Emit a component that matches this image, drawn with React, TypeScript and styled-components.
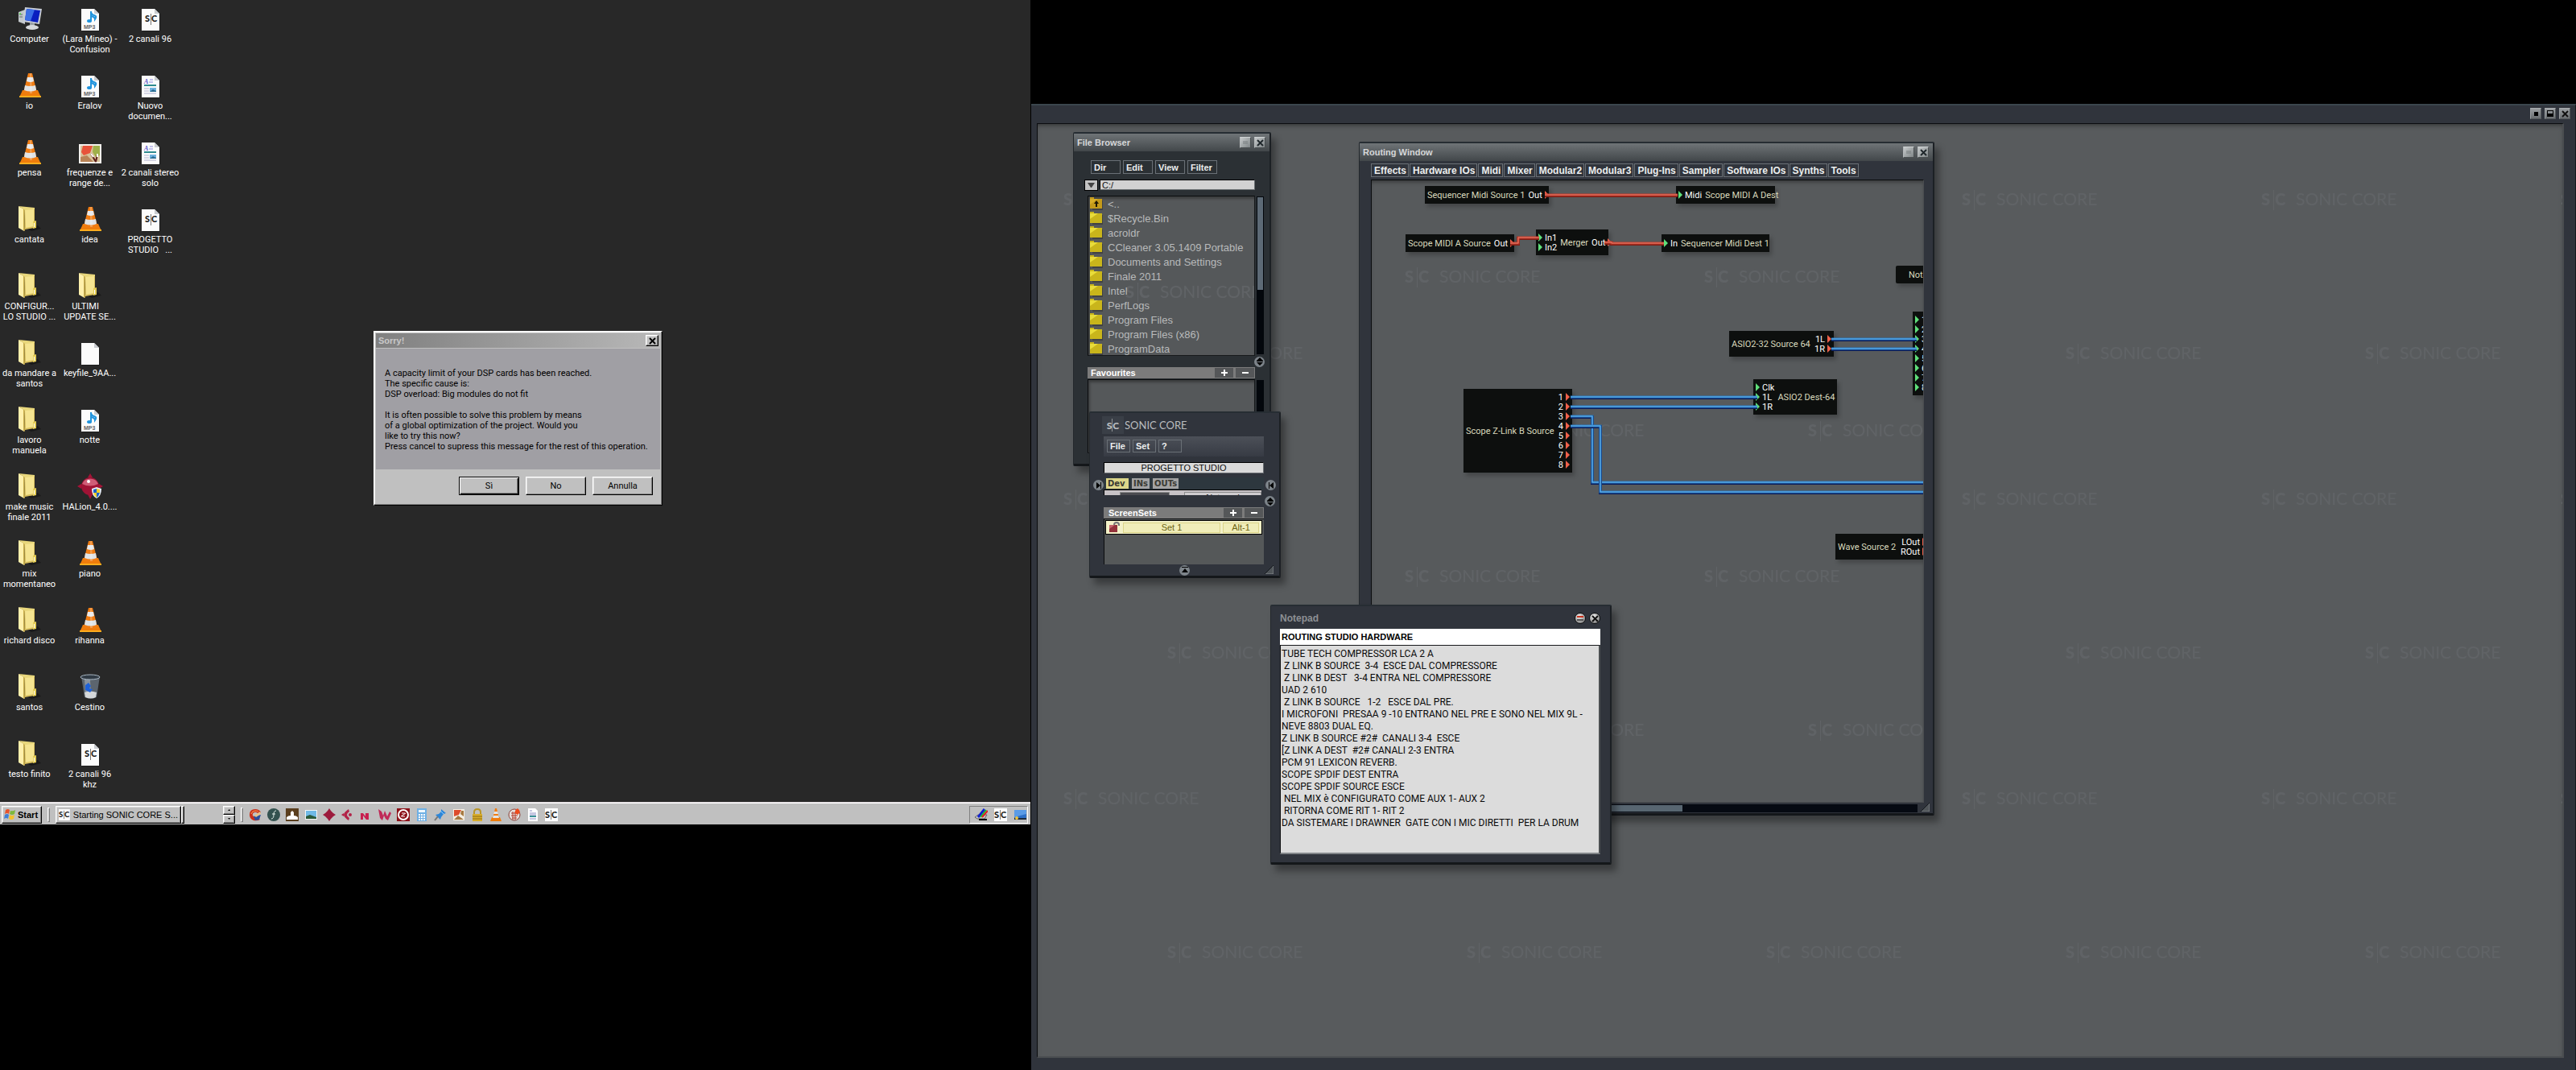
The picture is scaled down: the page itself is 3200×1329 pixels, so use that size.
import React from 'react';
import styled, { createGlobalStyle, css } from 'styled-components';

const SANS = '"Liberation Sans", Arial, Helvetica, sans-serif';
const NARROW = 'Roboto, "Liberation Sans", sans-serif';
const LOGO = 'Lato, "Open Sans", sans-serif';

const GlobalStyle = createGlobalStyle`
  * { box-sizing: border-box; }
  body { margin: 0; background: #000; font-family: ${SANS}; font-size: 11px; }
  button, input, textarea { font-family: inherit; font-size: inherit; margin: 0; border-radius: 0; outline: none; }
  ul { list-style: none; margin: 0; padding: 0; }
`;

const Screens = styled.div`
  display: grid;
  grid-template-columns: 2fr 3fr;
  min-height: 100vh;
`;

/* ---------- left monitor ---------- */

const LeftScreen = styled.div`
  position: relative;
  display: flex;
  flex-direction: column;
  align-self: start;
  background: #282828;
`;

const IconGrid = styled.ul`
  display: grid;
  grid-auto-flow: column;
  grid-template-rows: repeat(12, 83px);
  grid-auto-columns: 75px;
`;

const IconCell = styled.li`
  display: flex;
  flex-direction: column;
  align-items: center;
  gap: 3px;
  padding: 7px 2px 0 0;
  color: #fff;
  font-family: ${NARROW};
  text-align: center;
  line-height: 13px;
  white-space: pre;
  svg { flex: none; }
`;

type Kind = 'computer' | 'cone' | 'folder' | 'mp3' | 'sc' | 'doc' | 'photo' | 'blank' | 'halion' | 'bin';

const Sheet = ({ children }: { children?: React.ReactNode }) => (
  <>
    <path d="M6 5h15l7 6v21h-22z" fill="#111" opacity=".5" />
    <path d="M5 4h16l6 6v21H5z" fill="#fbfbfb" />
    <path d="M21 4l6 6h-6z" fill="#c9ccd0" />
    {children}
  </>
);

const ScMark = () => (
  <>
    <text x="9" y="20" fontFamily={LOGO} fontWeight="900" fontSize="11" fill="#1d1d1d">S</text>
    <rect x="16" y="10" width="1" height="14" fill="#777" />
    <text x="17" y="20" fontFamily={LOGO} fontWeight="900" fontSize="11" fill="#1d1d1d">C</text>
  </>
);

const DesktopGlyph = ({ kind, size = 32 }: { kind: Kind; size?: number }) => (
  <svg width={size} height={size} viewBox="0 0 32 32" aria-hidden="true">
    {kind === 'computer' && (
      <>
        <path d="M2 8l8-3v18l-8-3z" fill="#c3c8cb" />
        <path d="M3 11h4M3 14h4" stroke="#5f6a6e" />
        <circle cx="4" cy="10" r="1" fill="#4fe03a" />
        <path d="M10 2l21 2-3 19-20-3z" fill="#c9ced6" />
        <path d="M12 4l17 2-3 15-16-3z" fill="#0a1fc0" />
        <path d="M12 4l10 1-5 14-7-1z" fill="#3b6fe6" />
        <path d="M16 21l6 1v4h-6z" fill="#9da4a8" />
        <ellipse cx="19" cy="27" rx="8" ry="3" fill="#d7dadc" />
      </>
    )}
    {kind === 'cone' && (
      <>
        <path d="M7 22h19l4 9H3z" fill="#ef7d0b" />
        <path d="M3 29h27v2H3z" fill="#ffad1e" />
        <path d="M14 1h5l6 24q-8 4-17 0z" fill="#f07c12" />
        <path d="M13 6h7l1 5q-4 2-9 0z" fill="#e6e9ec" />
        <path d="M10 16q6 2 13 0l1 6q-7 3-15 0z" fill="#dfe3e6" />
        <path d="M16 1h2l1 25h-3z" fill="#fff" opacity=".25" />
      </>
    )}
    {kind === 'folder' && (
      <>
        <path d="M12 28l14-4 4 4-12 3z" fill="#0c0c0c" opacity=".5" />
        <path d="M9 3l13-1v25l-12 2z" fill="#d8bf5e" />
        <path d="M10 4l11-1v22l-10 2z" fill="#f5e491" />
        <path d="M2 0l7 4v27l-7-4z" fill="#fff0ac" />
        <path d="M2 0l20 2v2L10 5z" fill="#e9d77b" />
        <path d="M9 4l1 27-2-1V4z" fill="#c9ad4a" />
        <path d="M20 19l4-1v9l-4 1z" fill="#e4cc55" />
        <path d="M21 21l1 0v5h-1z" fill="#fff" />
      </>
    )}
    {kind === 'mp3' && (
      <Sheet>
        <path d="M17 19V7q0 4 4 5t1 5q0-3-5-4" fill="none" stroke="#2194dd" strokeWidth="2" />
        <ellipse cx="15" cy="19" rx="3" ry="2" fill="#2194dd" />
        <text x="8" y="29" fontFamily={SANS} fontWeight="700" fontSize="7" fill="#666">MP3</text>
      </Sheet>
    )}
    {kind === 'sc' && (
      <Sheet>
        <ScMark />
      </Sheet>
    )}
    {kind === 'doc' && (
      <Sheet>
        <text x="8" y="14" fontFamily='"Liberation Serif", serif' fontStyle="italic" fontWeight="700" fontSize="8" fill="#5c55c9">A</text>
        <path d="M15 9h4M14 12h5" stroke="#8f8ae0" />
        <path d="M8 16h15" stroke="#2f8b8f" strokeWidth="2" />
        <path d="M8 20h6M8 23h6M8 26h15" stroke="#b1b1d0" />
        <rect x="15" y="19" width="8" height="5" fill="#6fb2df" />
        <path d="M15 24l4-3 4 2v1z" fill="#2b6d92" />
      </Sheet>
    )}
    {kind === 'photo' && (
      <>
        <rect x="2" y="6" width="28" height="24" fill="#f3f0ec" />
        <rect x="4" y="8" width="24" height="20" fill="#d9c49c" />
        <path d="M7 8h12l-3 9-8 3-3-4z" fill="#e8533a" />
        <path d="M20 8h8v12l-5 2-4-6z" fill="#9fb04a" />
        <path d="M4 22l8-2 8 8H4z" fill="#b98356" />
        <path d="M17 18l6 10M25 19l-2 9" stroke="#5d1f1a" strokeWidth="2" />
        <path d="M17 18l3 4M25 18v4" stroke="#fff" strokeWidth="2" />
      </>
    )}
    {kind === 'blank' && <Sheet />}
    {kind === 'halion' && (
      <>
        <path d="M16 0l3 5h-6zM0 16l5-3v6zM32 16l-5-3v6zM16 32l3-6h-6z" fill="#a31336" />
        <circle cx="16" cy="16" r="11" fill="#a01335" />
        <path d="M6 13a11 11 0 0 1 20 0q-10 5-20 0z" fill="#cf5d77" />
        <circle cx="14" cy="10" r="2" fill="#fff" />
        <path d="M18 19l6-2 6 2q0 9-6 12q-6-3-6-12z" fill="#e8eef4" />
        <path d="M20 20l4-1v5h-4zM24 24h4q-1 4-4 6z" fill="#1b63c9" />
        <path d="M24 19l4 1v4h-4zM20 24h4v6q-3-2-4-6z" fill="#f3cf2b" />
      </>
    )}
    {kind === 'bin' && (
      <>
        <path d="M5 3h23l-4 26q-7 3-15 0z" fill="#626c76" opacity=".9" />
        <path d="M9 7h7l1 22q-5 0-7-1z" fill="#a7b1bb" opacity=".6" />
        <path d="M9 23q7-3 15 0l-1 6q-6 3-13 0z" fill="#d5d8da" />
        <ellipse cx="16" cy="4" rx="12" ry="3" fill="#303a44" stroke="#aab8c4" />
        <path d="M10 14l4-3 3 4-2 3 4 1-3 4-6-3z" fill="#1f62d8" />
      </>
    )}
  </svg>
);

const desktopIcons: [Kind, string][] = [
  ['computer', 'Computer'],
  ['cone', 'io'],
  ['cone', 'pensa'],
  ['folder', 'cantata'],
  ['folder', 'CONFIGUR...\nLO STUDIO ...'],
  ['folder', 'da mandare a\nsantos'],
  ['folder', 'lavoro\nmanuela'],
  ['folder', 'make music\nfinale 2011'],
  ['folder', 'mix\nmomentaneo'],
  ['folder', 'richard disco'],
  ['folder', 'santos'],
  ['folder', 'testo finito'],
  ['mp3', '(Lara Mineo) -\nConfusion'],
  ['mp3', 'Eralov'],
  ['photo', 'frequenze e\nrange de...'],
  ['cone', 'idea'],
  ['folder', 'ULTIMI    \nUPDATE SE...'],
  ['blank', 'keyfile_9AA...'],
  ['mp3', 'notte'],
  ['halion', 'HALion_4.0....'],
  ['cone', 'piano'],
  ['cone', 'rihanna'],
  ['bin', 'Cestino'],
  ['sc', '2 canali 96\nkhz'],
  ['sc', '2 canali 96'],
  ['doc', 'Nuovo\ndocumen...'],
  ['doc', '2 canali stereo\nsolo'],
  ['sc', 'PROGETTO\nSTUDIO   ...'],
];

const raised = css`
  border: 1px solid;
  border-color: #fff #000 #000 #fff;
  box-shadow: inset -1px -1px 0 #808080, inset 1px 1px 0 #dfdfdf;
  background: #c0c0c0;
`;

const Dialog = styled.section`
  position: absolute;
  left: 464px;
  top: 411px;
  width: 359px;
  padding: 2px;
  ${raised}
  box-shadow: inset -1px -1px 0 #808080, inset 1px 1px 0 #fff;
  font-family: ${NARROW};
`;

const DialogTitle = styled.header`
  display: flex;
  align-items: center;
  justify-content: space-between;
  height: 18px;
  margin-bottom: 1px;
  padding: 0 2px 0 3px;
  background: linear-gradient(90deg, #808080, #b8b8b8);
  color: #c8c8c8;
  font-family: ${SANS};
  font-weight: 700;
`;

const DialogClose = styled.button`
  display: grid;
  place-items: center;
  width: 16px;
  height: 14px;
  padding: 0;
  ${raised}
`;

const DialogText = styled.p`
  margin: 0;
  height: 150px;
  padding: 24px 11px;
  background: #a09fa4;
  color: #000;
  line-height: 13px;
  white-space: pre;
`;

const DialogButtons = styled.div`
  display: flex;
  justify-content: flex-end;
  gap: 8px;
  padding: 9px 9px 10px;
`;

const DialogButton = styled.button<{ $default?: boolean }>`
  width: 75px;
  height: 23px;
  padding: 0;
  color: #000;
  ${raised}
  ${(p) => p.$default && 'border-color: #000; box-shadow: inset 1px 1px 0 #fff, inset -1px -1px 0 #000, inset -2px -2px 0 #808080;'}
`;

const Taskbar = styled.footer`
  display: flex;
  align-items: center;
  height: 28px;
  padding: 2px 3px 0 2px;
  border-top: 1px solid #dfd8dc;
  box-shadow: inset 0 1px 0 #fff;
  background: #c0c0c0;
`;

const StartButton = styled.button`
  display: flex;
  align-items: center;
  gap: 2px;
  width: 50px;
  height: 22px;
  padding: 0 2px;
  color: #000;
  font-weight: 700;
  ${raised}
`;

const Grip = styled.span`
  width: 3px;
  height: 18px;
  margin: 0 7px;
  border: 1px solid;
  border-color: #fff #808080 #808080 #fff;
`;

const TaskButton = styled.button`
  display: flex;
  align-items: center;
  gap: 4px;
  width: 156px;
  height: 22px;
  padding: 0 3px;
  color: #000;
  white-space: nowrap;
  ${raised}
`;

const TaskEdge = styled.span`
  width: 4px;
  height: 22px;
  margin-right: auto;
  ${raised}
`;

const TaskArea = styled.div`
  display: flex;
  width: 208px;
`;

const Spinner = styled.div`
  display: grid;
  grid-template-rows: 11px 11px;
`;

const SpinButton = styled.button`
  display: grid;
  place-items: center;
  width: 15px;
  padding: 0;
  ${raised}
`;

const QuickLaunch = styled.div`
  display: flex;
  flex: 1;
  gap: 7px;
  svg { flex: none; }
`;

const Tray = styled.div`
  display: flex;
  align-items: center;
  gap: 8px;
  height: 22px;
  padding: 0 1px 0 6px;
  border: 1px solid;
  border-color: #808080 #fff #fff #808080;
`;

const Small = ({ children }: { children: React.ReactNode }) => (
  <svg width="16" height="16" viewBox="0 0 16 16" aria-hidden="true">{children}</svg>
);

const ScSmall = () => (
  <Small>
    <rect width="16" height="16" fill="#fff" />
    <text x="0" y="12" fontFamily={LOGO} fontWeight="900" fontSize="11" fill="#222">S</text>
    <rect x="7" y="2" width="1" height="12" fill="#777" />
    <text x="8" y="12" fontFamily={LOGO} fontWeight="900" fontSize="11" fill="#222">C</text>
  </Small>
);

const quick: React.ReactNode[] = [
  <>
    <path d="M1 8Q1 1 8 1q5 0 7 4l-4 1q-2-2-4-1-3 1-2 4 2 3 6 2l3 3q-4 2-8 1-5-2-5-7z" fill="#c9301a" />
    <path d="M3 7q1-4 5-4 3 0 4 1" stroke="#ffa05a" fill="none" />
    <path d="M6 10l9-2-2 6-5 1z" fill="#2b4f9e" />
    <path d="M7 9l7-5 1 3-6 4z" fill="#e8c28a" />
  </>,
  <>
    <circle cx="8" cy="8" r="8" fill="#33524f" />
    <path d="M11 3q-3 0-3 5t-3 5M6 7h4" stroke="#e4efe9" fill="none" />
  </>,
  <>
    <rect width="16" height="16" fill="#5a3e1e" />
    <path d="M1 11q2-2 5-2V5l2-2 2 2v4q3 0 5 2v3H1z" fill="#fff" />
  </>,
  <>
    <rect x="1" y="2" width="15" height="12" fill="#f4f6f6" />
    <rect x="2" y="3" width="13" height="10" fill="#6fb9e6" />
    <path d="M2 10l5-2 8 3v2H2z" fill="#2a5a3a" />
  </>,
  <path d="M8 0l2 3 3 3 3 2-3 2-3 3-2 3-2-3-3-3-3-2 3-2 3-3z" fill="#9c1a3c" />,
  <>
    <path d="M9 1Q3 5 3 8t6 7l1-3q-3-2-3-4t3-4zM0 8l3-2v4z" fill="#b22348" />
    <circle cx="11" cy="8" r="2" fill="#b22348" />
  </>,
  <path d="M1 6h3l3 4V6h4v8H8l-4-5v5H1z" fill="#c81f4f" />,
  <path d="M0 1l4 3 2 5 2-6 3 7 3-6 2 2-4 9-3-2-2-4-2 6-3-3z" fill="#c02a58" />,
  <>
    <rect width="16" height="16" fill="#8c1018" />
    <circle cx="8" cy="8" r="6" fill="none" stroke="#fff" strokeWidth="2" />
    <path d="M5 10l6-4M6 6h4M6 10h4" stroke="#fff" />
  </>,
  <>
    <rect x="2" width="12" height="16" fill="#6fb0e4" />
    <rect x="4" y="2" width="8" height="3" fill="#eef8ff" />
    <path d="M4 8h8M4 11h8M4 14h8" stroke="#fff" strokeWidth="2" strokeDasharray="2 1" />
  </>,
  <>
    <path d="M9 1l6 5-3 1-3 4-1 3-6-6 4-1 3-3z" fill="#2d86d8" />
    <path d="M5 10l-4 5" stroke="#777" strokeWidth="2" />
    <path d="M8 3l4 4" stroke="#8fd0ff" />
  </>,
  <>
    <rect x="1" y="1" width="14" height="14" fill="#f5efe4" />
    <path d="M2 2h9l-3 6-6 2z" fill="#dd4c2c" />
    <path d="M2 14l5-5 7 5zM11 3h3v7l-4-3z" fill="#a67a42" />
  </>,
  <>
    <path d="M4 8V5q0-4 4-4t4 4v3" fill="none" stroke="#b99526" strokeWidth="2" />
    <rect x="2" y="7" width="12" height="9" fill="#d8ad2b" />
    <path d="M2 10h12M2 13h12" stroke="#8e6c12" />
  </>,
  <>
    <path d="M3 11h10l2 5H1z" fill="#ef7d0b" />
    <path d="M7 0h2l3 13q-4 2-8 0z" fill="#f07c12" />
    <path d="M6 4h4l1 3H5zM5 9h6l1 3H4z" fill="#e4e4e4" />
  </>,
  <>
    <circle cx="8" cy="8" r="7" fill="#e6e2e0" stroke="#8a4038" />
    <path d="M4 6h8M4 9h8M5 12h6M6 4v10M9 4v10" stroke="#b23c2d" />
    <path d="M9 6q-1-4 3-6 3 2 3 5l-3 3z" fill="#ee4a1c" />
  </>,
  <>
    <path d="M2 0h9l3 3v13H2z" fill="#fff" />
    <path d="M4 3h3M4 6h8M4 8h8M4 13h8" stroke="#8f8fc4" />
    <path d="M4 10h8" stroke="#3d9298" strokeWidth="2" />
  </>,
];

const CrossGlyph = ({ color = '#000' }: { color?: string }) => (
  <svg width="9" height="9" viewBox="0 0 9 9" aria-hidden="true">
    <path d="M1 1l7 7M8 1l-7 7" stroke={color} strokeWidth="2" />
  </svg>
);

/* ---------- right monitor ---------- */

const RightScreen = styled.div`
  position: relative;
  display: flex;
  padding: 129px 0 0 1px;
`;

const MainWindow = styled.main`
  display: flex;
  flex-direction: column;
  flex: 1;
  padding: 0 14px 15px 7px;
  background: #30343c;
  border-top: 2px solid #3b464d;
  border-right: 1px solid #14181c;
`;

const MainTitle = styled.header`
  display: flex;
  justify-content: flex-end;
  gap: 4px;
  height: 22px;
  padding: 3px 0 0;
  margin-right: -8px;
`;

const MainCanvas = styled.div`
  position: relative;
  flex: 1;
  overflow: hidden;
  border: solid;
  border-width: 1px 2px 2px 1px;
  border-color: #0b0d10 #4a4d50 #4a4d50 #0b0d10;
  background: #585b5d;
  box-shadow: inset 0 4px 6px -3px rgba(0, 0, 0, 0.5);
`;

const WatermarkLayer = styled.svg`
  position: absolute;
  inset: 0;
  width: 100%;
  height: 100%;
  pointer-events: none;
`;

const Mark = ({ x, y }: { x: number; y: number }) => (
  <g transform={`translate(${x} ${y})`} fill="#606366" fontFamily={LOGO}>
    <text x="0" y="7" fontSize="20" fontWeight="900">S</text>
    <rect x="15" y="-12" width="1" height="25" />
    <text x="17" y="7" fontSize="20" fontWeight="900">C</text>
    <text x="43" y="7" fontSize="21">SONIC CORE</text>
  </g>
);

const Watermark = ({ id, x, y }: { id: string; x: number; y: number }) => (
  <WatermarkLayer aria-hidden="true">
    <defs>
      <pattern id={id} x={x} y={y - 20} width="372" height="372" patternUnits="userSpaceOnUse">
        <Mark x={1} y={20} />
        <Mark x={130} y={211} />
      </pattern>
    </defs>
    <rect width="100%" height="100%" fill={`url(#${id})`} />
  </WatermarkLayer>
);

const Chrome = styled.button`
  display: grid;
  place-items: center;
  flex: none;
  width: 14px;
  height: 14px;
  padding: 0;
  border: 1px solid;
  border-color: #cfd3d4 #4b5052 #4b5052 #b4b8ba;
  background: linear-gradient(135deg, #c6cacb, #7f8587);
`;

const DarkChrome = styled(Chrome)`
  border-color: #a9adb0 #55595c #55595c #999da0;
  background: linear-gradient(#9a9ea1, #6a6e71);
`;

const FloatWindow = styled.section<{ $x: number; $y: number; $w: number; $h?: number; $tone?: string }>`
  position: absolute;
  left: ${(p) => p.$x}px;
  top: ${(p) => p.$y}px;
  width: ${(p) => p.$w}px;
  ${(p) => p.$h && `min-height: ${p.$h}px;`}
  border: solid;
  border-width: 2px 2px 3px 1px;
  border-color: #262d33 #1c2024 #14171a #23282c;
  border-radius: 2px;
  background: ${(p) => p.$tone || '#30343c'};
  box-shadow: 6px 8px 8px rgba(0, 0, 0, 0.35);
`;

const TitleBar = styled.header`
  display: flex;
  align-items: center;
  gap: 4px;
  height: 22px;
  padding: 0 5px 0 4px;
  background: linear-gradient(#6f7477, #42474a);
  color: #d6d8d9;
  font-weight: 700;
`;

const TitleText = styled.span`
  flex: 1;
`;

const MenuRow = styled.nav<{ $gap: number }>`
  display: flex;
  gap: ${(p) => p.$gap}px;
`;

const MenuButton = styled.button<{ $w?: number; $h?: number; $large?: boolean }>`
  ${(p) => p.$w && `width: ${p.$w}px;`}
  height: ${(p) => p.$h || 17}px;
  padding: 0 2px 0 3px;
  border: 1px solid #6a7076;
  background: transparent;
  color: #eceeee;
  font-size: ${(p) => (p.$large ? 12 : 11)}px;
  font-weight: 700;
  text-align: left;
  white-space: nowrap;
`;

const MinusChrome = () => (
  <Chrome aria-label="Minimize">
    <svg width="8" height="8" viewBox="0 0 8 8"><path d="M1 3h6M1 5h6" stroke="#777c7e" /></svg>
  </Chrome>
);

const CloseChrome = () => (
  <Chrome aria-label="Close">
    <CrossGlyph color="#20282c" />
  </Chrome>
);

/* file browser */

const BrowserMenu = styled.div`
  padding: 11px 0 0 21px;
`;

const PathRow = styled.div`
  display: flex;
  gap: 2px;
  padding: 7px 18px 0 13px;
`;

const PathDrop = styled.button`
  display: grid;
  place-items: center;
  width: 17px;
  height: 14px;
  padding: 0;
  border: 1px solid #000;
  background: #c3c3c3;
`;

const PathInput = styled.input`
  flex: 1;
  min-width: 0;
  height: 13px;
  padding: 0 2px;
  border: 1px solid;
  border-color: #000 #6a6f72 #6a6f72 #000;
  background: #d2d2d2;
  color: #111;
`;

const ListRow = styled.div`
  display: flex;
  gap: 2px;
  padding: 6px 7px 0 17px;
`;

const FileList = styled.ul`
  position: relative;
  flex: 1;
  height: 199px;
  overflow: hidden;
  border: 1px solid;
  border-color: #0a0c0e #171a1c #171a1c #0a0c0e;
  background: #55585a;
  box-shadow: inset 2px 3px 3px rgba(0, 0, 0, 0.3);
`;

const FileItem = styled.li`
  position: relative;
  display: flex;
  align-items: center;
  gap: 6px;
  height: 18px;
  padding-left: 2px;
  color: #b8babb;
  font-size: 13px;
  white-space: nowrap;
`;

const FolderGlyph = ({ up }: { up?: boolean }) => (
  <svg width="16" height="16" viewBox="0 0 16 16" aria-hidden="true">
    <path d="M3 4h13v12H3z" fill="#333" opacity=".6" />
    <path d="M0 2V0h5v2h10v12H0z" fill={up ? '#c49a1a' : '#c9b51b'} />
    <path d="M0 2h10L0 9z" fill={up ? '#d8ae28' : '#e9dc3a'} />
    {up && <path d="M8 4L5 8h2v4h2V8h2z" fill="#1d1604" />}
  </svg>
);

const Track = styled.div<{ $h: number }>`
  width: 9px;
  height: ${(p) => p.$h}px;
  margin-top: 1px;
  padding: 1px;
  background: #03070c;
`;

const Thumb = styled.div<{ $size: number }>`
  height: ${(p) => p.$size}px;
  background: #5d6a76;
`;

const SectionHead = styled.header<{ $pad?: number }>`
  display: flex;
  align-items: center;
  gap: 3px;
  height: 14px;
  padding: 0 1px 0 ${(p) => p.$pad || 4}px;
  background: #7b7b7b;
  color: #fff;
  font-weight: 700;
`;

const HeadButton = styled.button`
  display: grid;
  place-items: center;
  width: 23px;
  height: 12px;
  padding: 0;
  border: 0;
  background: #555759;
`;

const AddRemove = () => (
  <>
    <HeadButton aria-label="Add">
      <svg width="8" height="8" viewBox="0 0 8 8"><path d="M0 4h8M4 0v8" stroke="#fff" strokeWidth="2" /></svg>
    </HeadButton>
    <HeadButton aria-label="Remove">
      <svg width="8" height="8" viewBox="0 0 8 8"><path d="M0 4h8" stroke="#fff" strokeWidth="2" /></svg>
    </HeadButton>
  </>
);

const SplitRow = styled.div<{ $h: number; $right: number }>`
  display: flex;
  align-items: center;
  justify-content: flex-end;
  height: ${(p) => p.$h}px;
  padding-right: ${(p) => p.$right}px;
`;

const FavHead = styled.div`
  padding: 0 18px 0 17px;
`;

const FavRow = styled(ListRow)`
  padding-top: 1px;
`;

const FavList = styled(FileList)`
  height: 92px;
`;

const RoundButton = styled.button`
  display: grid;
  place-items: center;
  flex: none;
  width: 13px;
  height: 13px;
  padding: 0;
  border: 0;
  border-radius: 50%;
  background: #7d848a;
`;

const roundPaths = {
  split: 'M6 1l4 4H2zM2 7h8l-4 4zM2 5h8v1H2z',
  right: 'M3 2l5 4-5 4zM8 2h1v8H8z',
  left: 'M9 2L4 6l5 4zM3 2h1v8H3z',
  up: 'M6 4l4 5H2zM2 2h8v1H2z',
};

const Round = ({ kind, label }: { kind: keyof typeof roundPaths; label: string }) => (
  <RoundButton aria-label={label}>
    <svg width="12" height="12" viewBox="0 0 12 12"><path d={roundPaths[kind]} fill="#000" /></svg>
  </RoundButton>
);

const files = ['<..', '$Recycle.Bin', 'acroldr', 'CCleaner 3.05.1409 Portable', 'Documents and Settings', 'Finale 2011', 'Intel', 'PerfLogs', 'Program Files', 'Program Files (x86)', 'ProgramData'];

/* sonic core panel */

const PanelBody = styled.div`
  padding: 4px 19px 0 17px;
`;

const Brand = styled.div`
  display: flex;
  align-items: center;
  height: 22px;
  margin: 0 0 3px -2px;
  color: #b9bcbf;
  font: 400 13px ${LOGO};
`;

const BrandBadge = styled.span`
  display: flex;
  align-items: center;
  justify-content: center;
  width: 27px;
  height: 22px;
  margin-right: 1px;
  background: #3a3f47;
  font-weight: 900;
  font-size: 12px;
`;

const BrandBar = styled.i`
  width: 1px;
  height: 16px;
  background: #8d9195;
`;

const PanelMenu = styled.div`
  padding: 4px;
  height: 25px;
  margin-bottom: 7px;
  background: linear-gradient(#4c5058, #373b44);
`;

const ProjectName = styled.input`
  display: block;
  width: 100%;
  height: 14px;
  padding: 0;
  border: 1px solid;
  border-color: #000 #6b6f73 #6b6f73 #000;
  background: #dadada;
  color: #111;
  text-align: center;
`;

const Tabs = styled.div`
  display: flex;
  gap: 4px;
  height: 15px;
  margin-top: 5px;
  padding: 1px 0 0 3px;
  background: #2d373e;
`;

const Tab = styled.button<{ $active?: boolean }>`
  height: 13px;
  padding: 0 2px;
  border: 0;
  background: ${(p) => (p.$active ? '#dcd68a' : '#a3a3a3')};
  color: #3a3a33;
  font-family: "DejaVu Sans", Verdana, sans-serif;
  font-weight: 700;
  font-size: 10px;
  line-height: 13px;
  text-align: left;
  &:first-child { width: 28px; }
`;

const DeviceStrip = styled.div`
  display: flex;
  justify-content: flex-end;
  gap: 18px;
  height: 7px;
  margin-right: 3px;
  overflow: hidden;
  border: solid #000;
  border-width: 1px 0 0 1px;
  background: #c7c2c6;
`;

const DeviceChip = styled.span<{ $dark?: boolean }>`
  width: ${(p) => (p.$dark ? 62 : 96)}px;
  height: 16px;
  margin-top: 2px;
  border: 1px solid #8b8b8b;
  background: ${(p) => (p.$dark ? '#4b4b50' : '#cfcccf')};
  color: #111;
  line-height: 12px;
  text-align: center;
`;

const SetList = styled.div`
  height: 57px;
  padding: 1px 2px 0 1px;
  border: solid #0a0c0e;
  border-width: 1px 0 0 1px;
  background: #555859;
`;

const SetRow = styled.div`
  display: flex;
  align-items: center;
  gap: 3px;
  height: 18px;
  padding: 0 3px 0 4px;
  border: 1px solid #000;
  background: #f3f1c8;
`;

const SetField = styled.input<{ $w?: number }>`
  ${(p) => (p.$w ? `width: ${p.$w}px;` : 'flex: 1;')}
  min-width: 0;
  height: 13px;
  padding: 0;
  border: 1px solid #dbd488;
  background: #f0edb9;
  color: #6d6512;
  text-align: center;
`;

const OverlayButton = styled.div<{ $x: number; $y: number }>`
  position: absolute;
  display: flex;
  left: ${(p) => p.$x}px;
  top: ${(p) => p.$y}px;
`;

const PanelFoot = styled.footer`
  display: flex;
  align-items: center;
  justify-content: center;
  height: 14px;
`;

const ResizeGlyph = () => (
  <svg width="11" height="11" viewBox="0 0 11 11" aria-hidden="true">
    <path d="M11 0v11H0z" fill="#4f5458" />
    <path d="M0 11L11 0" stroke="#14181c" />
    <path d="M11 1v10H1" stroke="#8a8f93" fill="none" />
  </svg>
);

/* routing window */

const RoutingMenu = styled.div`
  padding: 3px 14px 0;
`;

const RoutingCanvas = styled.div`
  position: relative;
  height: 774px;
  margin: 3px 11px 0 14px;
  overflow: hidden;
  border: 1px solid;
  border-color: #0a0c0e #4a4d50 #4a4d50 #0a0c0e;
  background: #575a5c;
  box-shadow: inset 0 4px 5px -2px rgba(0, 0, 0, 0.4);
`;

const RoutingFoot = styled.footer`
  display: flex;
  align-items: flex-start;
  gap: 4px;
  padding: 0 4px 0 14px;
  height: 13px;
`;

const HTrack = styled.div`
  flex: 1;
  height: 10px;
  margin-top: 2px;
  padding: 1px 0;
  background: #060a12;
`;

const HThumb = styled.div`
  width: 57%;
  height: 8px;
  background: #586671;
`;

const WireLayer = styled.svg`
  position: absolute;
  inset: 0;
  width: 100%;
  height: 100%;
`;

const Node = styled.div<{ $x: number; $y: number; $w: number; $h: number; $dest?: boolean }>`
  position: absolute;
  left: ${(p) => p.$x}px;
  top: ${(p) => p.$y}px;
  display: flex;
  align-items: center;
  justify-content: ${(p) => (p.$dest ? 'flex-start' : 'space-between')};
  gap: 4px;
  width: ${(p) => p.$w}px;
  height: ${(p) => p.$h}px;
  padding: 0 3px;
  background: #0d0f0e;
  box-shadow: 3px 4px 5px rgba(0, 0, 0, 0.22);
  color: #d9d9bd;
  font-family: ${NARROW};
  white-space: nowrap;
`;

const Ports = styled.ul`
  display: grid;
  grid-auto-rows: 12px;
  color: #fff;
`;

const Port = styled.li<{ $out?: boolean }>`
  display: flex;
  align-items: center;
  justify-content: ${(p) => (p.$out ? 'flex-end' : 'flex-start')};
  gap: 3px;
`;

const Arrow = ({ color }: { color: string }) => (
  <svg width="5" height="10" viewBox="0 0 5 10" aria-hidden="true"><path d="M0 0l5 5-5 5z" fill={color} /></svg>
);

type NodeData = { name: string; x: number; y: number; w: number; h: number; ins?: string[]; outs?: string[] };

const nodes: NodeData[] = [
  { name: 'Sequencer Midi Source 1', x: 66, y: 7, w: 154, h: 22, outs: ['Out'] },
  { name: 'Scope MIDI A Dest', x: 378, y: 7, w: 123, h: 22, ins: ['Midi'] },
  { name: 'Scope MIDI A Source', x: 42, y: 67, w: 135, h: 22, outs: ['Out'] },
  { name: 'Merger', x: 204, y: 61, w: 90, h: 32, ins: ['In1', 'In2'], outs: ['Out'] },
  { name: 'Sequencer Midi Dest 1', x: 360, y: 67, w: 134, h: 22, ins: ['In'] },
  { name: 'ASIO2-32 Source 64', x: 444, y: 187, w: 130, h: 32, outs: ['1L', '1R'] },
  { name: 'ASIO2 Dest-64', x: 474, y: 247, w: 104, h: 44, ins: ['Clk', '1L', '1R'] },
  { name: 'Scope Z-Link B Source', x: 114, y: 259, w: 135, h: 104, outs: ['1', '2', '3', '4', '5', '6', '7', '8'] },
  { name: 'Wave Source 2', x: 576, y: 439, w: 116, h: 32, outs: ['LOut', 'ROut'] },
  { name: '', x: 672, y: 163, w: 90, h: 104, ins: ['1', '2', '3', '4', '5', '6', '7', '8'] },
];

const NoteNode = styled(Node)`
  padding-left: 16px;
  border-radius: 2px;
`;

const wires: { d: string; red?: boolean }[] = [
  { red: true, d: 'M215 18H380' },
  { red: true, d: 'M172 78H182V71H208' },
  { red: true, d: 'M289 77H298V78H363' },
  { d: 'M571 197H677' },
  { d: 'M571 209H677' },
  { d: 'M247 269H479' },
  { d: 'M247 281H479' },
  { d: 'M247 293H274V375H690' },
  { d: 'M247 305H284V387H690' },
];

/* notepad */

const NoteHead = styled.header`
  display: flex;
  align-items: center;
  gap: 4px;
  height: 28px;
  padding-top: 2px;
  color: #8d9094;
  font-size: 12px;
  font-weight: 700;
`;

const NoteBody = styled.div`
  padding: 0 12px 10px 11px;
`;

const BallButton = styled.button`
  display: grid;
  place-items: center;
  width: 14px;
  height: 14px;
  padding: 0;
  border: 1px solid #0e1012;
  border-radius: 50%;
  background: radial-gradient(circle at 40% 30%, #eee, #6b6b6b);
`;

const NoteTitle = styled.input`
  display: block;
  width: 100%;
  height: 20px;
  padding: 0 2px;
  border: 0;
  background: #fff;
  color: #000;
  font-weight: 700;
`;

const NoteText = styled.textarea`
  display: block;
  width: 100%;
  height: 260px;
  padding: 3px 0 3px 1px;
  border: solid;
  border-width: 1px 2px 2px 1px;
  border-color: #17191c #4b4f52 #83878a #0c0d0f;
  background: #dcdcdc;
  color: #0a0a0a;
  font-family: ${NARROW};
  font-size: 12px;
  line-height: 15px;
  white-space: pre;
  resize: none;
  overflow: hidden;
`;

const noteLines = [
  'TUBE TECH COMPRESSOR LCA 2 A',
  ' Z LINK B SOURCE  3-4  ESCE DAL COMPRESSORE',
  ' Z LINK B DEST   3-4 ENTRA NEL COMPRESSORE',
  'UAD 2 610',
  ' Z LINK B SOURCE   1-2   ESCE DAL PRE.',
  'I MICROFONI  PRESAA 9 -10 ENTRANO NEL PRE E SONO NEL MIX 9L -',
  'NEVE 8803 DUAL EQ.',
  'Z LINK B SOURCE #2#  CANALI 3-4  ESCE',
  '[Z LINK A DEST  #2# CANALI 2-3 ENTRA',
  'PCM 91 LEXICON REVERB.',
  'SCOPE SPDIF DEST ENTRA',
  'SCOPE SPDIF SOURCE ESCE',
  ' NEL MIX è CONFIGURATO COME AUX 1- AUX 2',
  ' RITORNA COME RIT 1- RIT 2',
  'DA SISTEMARE I DRAWNER  GATE CON I MIC DIRETTI  PER LA DRUM',
];

const FileBrowser = () => (
  <FloatWindow $x={53} $y={164} $w={246} $h={415} $tone="#2b3034">
    <TitleBar>
      <TitleText>File Browser</TitleText>
      <MinusChrome />
      <CloseChrome />
    </TitleBar>
    <BrowserMenu>
      <MenuRow $gap={3}>
        {['Dir', 'Edit', 'View', 'Filter'].map((m) => <MenuButton key={m} $w={37}>{m}</MenuButton>)}
      </MenuRow>
    </BrowserMenu>
    <PathRow>
      <PathDrop aria-label="Recent folders">
        <svg width="9" height="6" viewBox="0 0 9 6"><path d="M0 0h9L5 6H4z" fill="#444" /></svg>
      </PathDrop>
      <PathInput aria-label="Path" defaultValue="C:/" />
    </PathRow>
    <ListRow>
      <FileList>
        <Watermark id="list-mark" x={-84} y={-72} />
        {files.map((f, i) => <FileItem key={f}><FolderGlyph up={i === 0} />{f}</FileItem>)}
      </FileList>
      <Track $h={196}><Thumb $size={115} /></Track>
    </ListRow>
    <SplitRow $h={14} $right={6}><Round kind="split" label="Resize list" /></SplitRow>
    <FavHead>
      <SectionHead><TitleText>Favourites</TitleText><AddRemove /></SectionHead>
    </FavHead>
    <FavRow>
      <FavList />
      <Track $h={90} />
    </FavRow>
  </FloatWindow>
);

const SonicPanel = () => (
  <FloatWindow $x={73} $y={511} $w={238}>
    <PanelBody>
      <Brand><BrandBadge>S<BrandBar />C</BrandBadge>SONIC CORE</Brand>
      <PanelMenu>
        <MenuRow $gap={3}>
          {['File', 'Set', '?'].map((m) => <MenuButton key={m} $w={29} $h={16}>{m}</MenuButton>)}
        </MenuRow>
      </PanelMenu>
      <ProjectName aria-label="Project" defaultValue="PROGETTO STUDIO" />
      <Tabs>
        <Tab $active>Dev</Tab>
        <Tab>INs</Tab>
        <Tab>OUTs</Tab>
      </Tabs>
      <DeviceStrip>
        <DeviceChip $dark />
        <DeviceChip>Notepad</DeviceChip>
      </DeviceStrip>
      <SplitRow $h={15} $right={0} />
      <SectionHead $pad={6}><TitleText>ScreenSets</TitleText><AddRemove /></SectionHead>
      <SetList>
        <SetRow>
          <svg width="14" height="14" viewBox="0 0 14 14" aria-hidden="true">
            <path d="M6 6V4q0-3 3-3t3 3v1" fill="none" stroke="#777" strokeWidth="2" />
            <rect x="0" y="4" width="10" height="9" fill="#93323b" />
            <path d="M0 4h7l-7 5z" fill="#c4656c" />
          </svg>
          <SetField aria-label="Screen set" defaultValue="Set 1" />
          <SetField aria-label="Shortcut" defaultValue="Alt-1" $w={45} />
        </SetRow>
      </SetList>
    </PanelBody>
    <PanelFoot><Round kind="up" label="Collapse" /></PanelFoot>
    <OverlayButton $x={4} $y={83}><Round kind="right" label="Expand left" /></OverlayButton>
    <OverlayButton $x={218} $y={83}><Round kind="left" label="Expand right" /></OverlayButton>
    <OverlayButton $x={217} $y={103}><Round kind="split" label="Resize strip" /></OverlayButton>
    <OverlayButton $x={217} $y={189}><ResizeGlyph /></OverlayButton>
  </FloatWindow>
);

const RoutingWindow = () => (
  <FloatWindow $x={408} $y={176} $w={715}>
    <TitleBar>
      <TitleText>Routing Window</TitleText>
      <MinusChrome />
      <CloseChrome />
    </TitleBar>
    <RoutingMenu>
      <MenuRow $gap={1}>
        {['Effects', 'Hardware IOs', 'Midi', 'Mixer', 'Modular2', 'Modular3', 'Plug-Ins', 'Sampler', 'Software IOs', 'Synths', 'Tools'].map((m) => (
          <MenuButton key={m} $large>{m}</MenuButton>
        ))}
      </MenuRow>
    </RoutingMenu>
    <RoutingCanvas>
      <Watermark id="routing-mark" x={40} y={120} />
      {nodes.map((n) => (
        <Node key={n.name + n.x} $x={n.x} $y={n.y} $w={n.w} $h={n.h} $dest={!n.outs}>
          {n.ins && (
            <Ports>{n.ins.map((p) => <Port key={p}><Arrow color="#5fe07a" />{p}</Port>)}</Ports>
          )}
          <span>{n.name}</span>
          {n.outs && (
            <Ports>{n.outs.map((p) => <Port key={p} $out>{p}<Arrow color="#f0604a" /></Port>)}</Ports>
          )}
        </Node>
      ))}
      <NoteNode $x={651} $y={106} $w={90} $h={22} $dest>Notepad</NoteNode>
      <WireLayer aria-hidden="true">
        {wires.map((w) => (
          <g key={w.d} fill="none">
            <path d={w.d} transform="translate(0 1)" stroke={w.red ? '#7d1d14' : '#0a1c5a'} strokeWidth="4" />
            <path d={w.d} stroke={w.red ? '#c23c2c' : '#2a78bd'} strokeWidth="3" />
            <path d={w.d} stroke={w.red ? '#e87e6c' : '#66b8f4'} strokeWidth="1" />
          </g>
        ))}
      </WireLayer>
    </RoutingCanvas>
    <RoutingFoot>
      <HTrack><HThumb /></HTrack>
      <ResizeGlyph />
    </RoutingFoot>
  </FloatWindow>
);

const Notepad = () => (
  <FloatWindow $x={298} $y={751} $w={424}>
    <NoteBody>
      <NoteHead>
        <TitleText>Notepad</TitleText>
        <BallButton aria-label="Minimize">
          <svg width="8" height="6" viewBox="0 0 8 6"><path d="M0 1h8" stroke="#c8321e" strokeWidth="2" /><path d="M0 5h8" stroke="#555" strokeWidth="2" /></svg>
        </BallButton>
        <BallButton aria-label="Close"><CrossGlyph color="#111" /></BallButton>
      </NoteHead>
      <NoteTitle aria-label="Note title" defaultValue="ROUTING STUDIO HARDWARE" />
      <NoteText aria-label="Note" wrap="off" spellCheck={false} defaultValue={noteLines.join('\n')} />
    </NoteBody>
  </FloatWindow>
);

const App = () => (
  <>
    <GlobalStyle />
    <Screens>
      <LeftScreen>
        <IconGrid>
          {desktopIcons.map(([kind, label]) => (
            <IconCell key={label}><DesktopGlyph kind={kind} />{label}</IconCell>
          ))}
        </IconGrid>
        <Taskbar>
          <StartButton>
            <svg width="15" height="15" viewBox="0 0 15 15" aria-hidden="true">
              <path d="M2 2q3-2 5 0L6 7Q4 5 1 7z" fill="#e8542c" />
              <path d="M8 3q3 1 6-1l-1 5q-3 2-6 0z" fill="#7fb83a" />
              <path d="M1 8q3-2 5 0l-1 5q-2-2-5 0z" fill="#3f7fd6" />
              <path d="M7 8q3 2 6 0l-1 5q-3 2-6 0z" fill="#f4c22c" />
            </svg>
            Start
          </StartButton>
          <Grip />
          <TaskArea>
            <TaskButton><ScSmall />Starting SONIC CORE S...</TaskButton>
            <TaskEdge />
          </TaskArea>
          <Spinner>
            <SpinButton aria-label="Previous"><svg width="3" height="2"><path d="M0 2h3L2 0z" /></svg></SpinButton>
            <SpinButton aria-label="Next"><svg width="3" height="2"><path d="M0 0h3L2 2z" /></svg></SpinButton>
          </Spinner>
          <Grip />
          <QuickLaunch>
            {quick.map((q, i) => <Small key={i}>{q}</Small>)}
            <ScSmall />
          </QuickLaunch>
          <Tray>
            <Small>
              <path d="M0 11l4-3h11l-3 5H3z" fill="#c8c8c8" stroke="#666" />
              <path d="M4 11L12 1" stroke="#1020d0" strokeWidth="3" />
              <path d="M7 11l7-9" stroke="#18c030" strokeWidth="2" />
              <path d="M9 11l7-8" stroke="#e02020" strokeWidth="2" />
              <path d="M5 14h10" stroke="#000" strokeWidth="2" />
            </Small>
            <ScSmall />
            <Small>
              <rect x="1" y="2" width="15" height="12" fill="#2d6fc6" />
              <path d="M1 2h15v5L1 11z" fill="#5a9be6" />
              <rect x="1" y="12" width="15" height="2" fill="#1d2a3c" />
              <circle cx="4" cy="12" r="2" fill="#f0c53a" />
            </Small>
          </Tray>
        </Taskbar>
        <Dialog role="dialog" aria-label="Sorry!">
          <DialogTitle>
            Sorry!
            <DialogClose aria-label="Close"><CrossGlyph /></DialogClose>
          </DialogTitle>
          <DialogText>
            {'A capacity limit of your DSP cards has been reached.\nThe specific cause is:\nDSP overload: Big modules do not fit\n\nIt is often possible to solve this problem by means\nof a global optimization of the project. Would you\nlike to try this now?\nPress cancel to supress this message for the rest of this operation.'}
          </DialogText>
          <DialogButtons>
            <DialogButton $default>Sì</DialogButton>
            <DialogButton>No</DialogButton>
            <DialogButton>Annulla</DialogButton>
          </DialogButtons>
        </Dialog>
      </LeftScreen>
      <RightScreen>
        <MainWindow>
          <MainTitle>
            <DarkChrome aria-label="Restore"><svg width="8" height="8"><path d="M2 2h5v5H2z" /></svg></DarkChrome>
            <DarkChrome aria-label="Maximize"><svg width="8" height="8"><path d="M0 0h8v8H0zM1 1v3h6V1z" fillRule="evenodd" /></svg></DarkChrome>
            <DarkChrome aria-label="Close"><CrossGlyph color="#111" /></DarkChrome>
          </MainTitle>
          <MainCanvas>
            <Watermark id="main-mark" x={31} y={94} />
          </MainCanvas>
        </MainWindow>
        <FileBrowser />
        <RoutingWindow />
        <SonicPanel />
        <Notepad />
      </RightScreen>
    </Screens>
  </>
);

export default App;
